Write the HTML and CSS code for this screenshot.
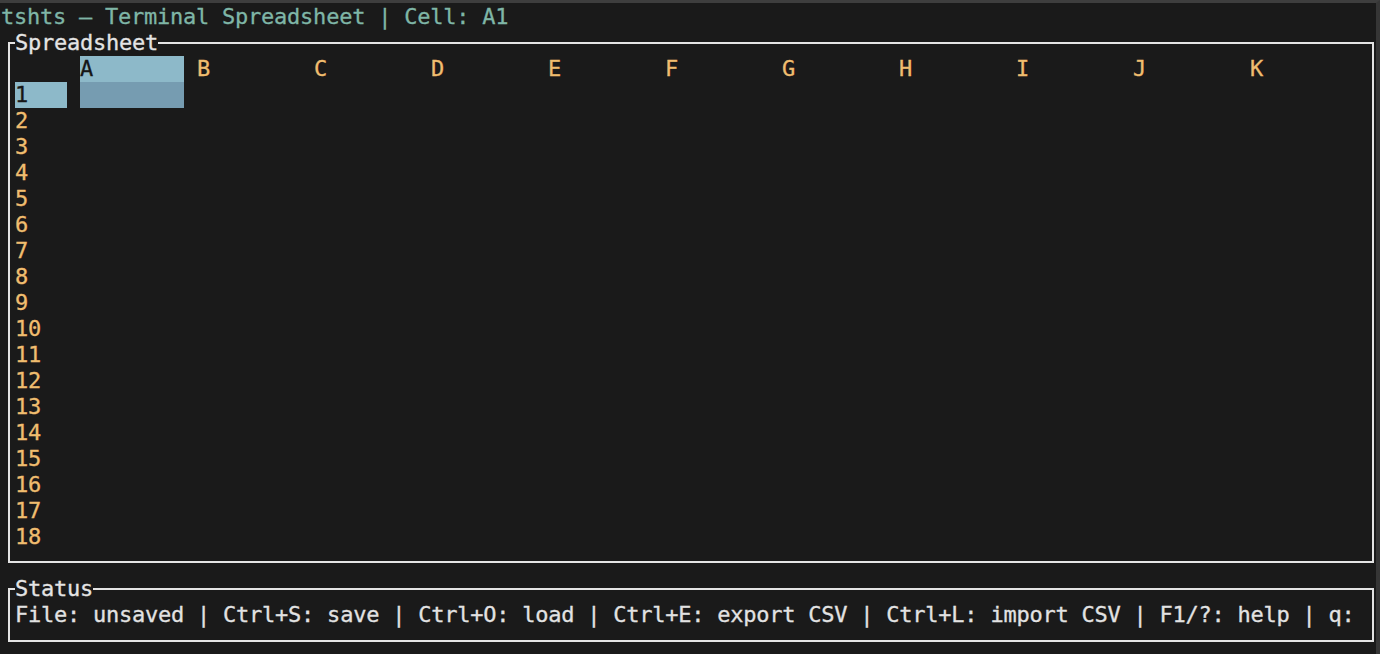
FILE: index.html
```html
<!DOCTYPE html>
<html lang="en">
<head>
<meta charset="utf-8">
<title>tshts – Terminal Spreadsheet</title>
<link rel="stylesheet" href="styles.css">
</head>
<body>
<div class="window">
  <div class="title">tshts – Terminal Spreadsheet | Cell: A1</div>

  <section class="panel sheet">
    <div class="panel-title">Spreadsheet</div>
    <div class="grid">
      <div class="corner"></div>
      <div class="col-h active">A</div>
      <div class="col-h">B</div>
      <div class="col-h">C</div>
      <div class="col-h">D</div>
      <div class="col-h">E</div>
      <div class="col-h">F</div>
      <div class="col-h">G</div>
      <div class="col-h">H</div>
      <div class="col-h">I</div>
      <div class="col-h">J</div>
      <div class="col-h">K</div>

      <div class="row-h active">1</div>
      <div class="cell selected"></div>
      <div class="row-h">2</div>
      <div class="row-h">3</div>
      <div class="row-h">4</div>
      <div class="row-h">5</div>
      <div class="row-h">6</div>
      <div class="row-h">7</div>
      <div class="row-h">8</div>
      <div class="row-h">9</div>
      <div class="row-h">10</div>
      <div class="row-h">11</div>
      <div class="row-h">12</div>
      <div class="row-h">13</div>
      <div class="row-h">14</div>
      <div class="row-h">15</div>
      <div class="row-h">16</div>
      <div class="row-h">17</div>
      <div class="row-h">18</div>
    </div>
  </section>

  <section class="panel status">
    <div class="panel-title">Status</div>
    <div class="status-line">File: unsaved | Ctrl+S: save | Ctrl+O: load | Ctrl+E: export CSV | Ctrl+L: import CSV | F1/?: help | q:</div>
  </section>
</div>
</body>
</html>
```

FILE: styles.css
```css
* { box-sizing: border-box; }

html, body {
  margin: 0;
  padding: 0;
  background: #1a1a1a;
}

.window {
  width: 1380px;
  height: 654px;
  overflow: hidden;
  background: #1a1a1a;
  border-top: 3px solid #3e3e3e;
  border-right: 4px solid #363636;
  padding-top: 1px;
  font-family: "DejaVu Sans Mono", "Liberation Mono", monospace;
  font-size: 22px;
  letter-spacing: -0.24px;
  line-height: 26px;
  color: #e2e2e2;
  -webkit-text-stroke: 0.3px currentColor;
}

.title,
.panel-title,
.status-line,
.col-h,
.row-h {
  white-space: nowrap;
}

.title {
  height: 26px;
  padding-left: 1px;
  color: #7fb6a7;
}

.panel {
  position: relative;
  margin: 12px 2px 0 8px;
  border: 2px solid #e4e4e4;
  padding-left: 5px;
}

.panel-title {
  position: absolute;
  top: -14px;
  left: 5px;
  height: 26px;
  background: #1a1a1a;
  color: #e4e4e4;
}

.sheet {
  padding-top: 12px;
  padding-bottom: 11px;
}

.status {
  margin-top: 25px;
  padding-top: 12px;
  padding-bottom: 12px;
}

.status-line {
  height: 26px;
  overflow: hidden;
  color: #e2e2e2;
}

.grid {
  display: grid;
  grid-template-columns: 52px repeat(11, 104px);
  grid-auto-rows: 26px;
  column-gap: 13px;
}

.col-h,
.row-h {
  color: #f0bd6f;
}

.row-h {
  grid-column: 1;
}

.col-h.active,
.row-h.active {
  background: #8db9c9;
  color: #161616;
}

.cell.selected {
  grid-column: 2;
  background: #769cb1;
}
```
